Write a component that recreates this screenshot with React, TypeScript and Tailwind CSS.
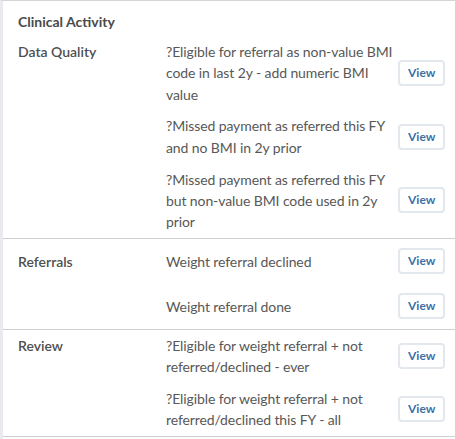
const sections = [
  {
    label: "Data Quality",
    items: [
      "?Eligible for referral as non-value BMI code in last 2y - add numeric BMI value",
      "?Missed payment as referred this FY and no BMI in 2y prior",
      "?Missed payment as referred this FY but non-value BMI code used in 2y prior",
    ],
  },
  {
    label: "Referrals",
    items: ["Weight referral declined", "Weight referral done"],
  },
  {
    label: "Review",
    items: [
      "?Eligible for weight referral + not referred/declined - ever",
      "?Eligible for weight referral + not referred/declined this FY - all",
    ],
  },
];

export default function App() {
  return (
    <div
      className="h-[439px] w-[455px] overflow-hidden border-t border-l-[3px] border-t-[#d4d4d4] border-l-[#e8eaed] bg-white text-[14px] leading-[21.3px] text-[#585858]"
      style={{ fontFamily: "Lato, 'Liberation Sans', sans-serif" }}
    >
      <div className="pt-[10px] pb-[3.5px] pl-[15px] font-bold text-[#4a4a4a]">Clinical Activity</div>

      {sections.map((section) => (
        <div key={section.label} className="border-b border-[#d0d0d0]">
          {section.items.map((item, index) => (
            <div key={item} className="flex items-center py-[5.25px] pr-[10px] pl-[15px]">
              <div className="flex items-start">
                <div className="w-[148px] shrink-0 font-semibold text-[#4f4f4f]">
                  {index === 0 ? section.label : null}
                </div>
                <p className="w-[232px] shrink-0 tracking-[-0.1px]">{item}</p>
              </div>
              <button
                type="button"
                className="my-[4.25px] ml-auto h-[26px] rounded-[4px] border-2 border-[#e3e8ee] bg-white px-[8px] text-[12px] leading-none font-bold text-[#3b6fa8]"
              >
                View
              </button>
            </div>
          ))}
        </div>
      ))}
    </div>
  );
}
